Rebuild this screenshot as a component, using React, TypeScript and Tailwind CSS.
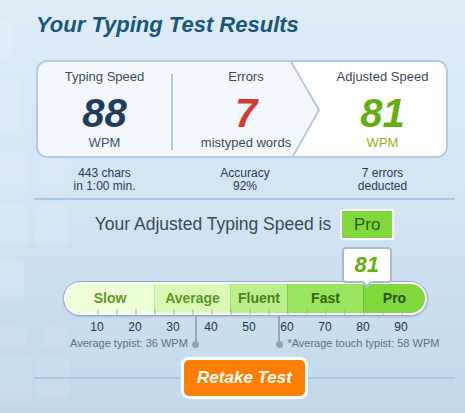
import React from "react";

const FONT = { fontFamily: '"Liberation Sans", Arial, sans-serif' };

// x position (relative to content column) of a WPM value on the scale
const pos = (wpm: number) => 25 + 3.8 * wpm;

const segments = [
  { label: "Slow", w: "w-[88px]", bg: "bg-[#ecffd6]", text: "text-[#5f9b24]", line: "" },
  { label: "Average", w: "w-[76px]", bg: "bg-[#dbf9b6]", text: "text-[#5a9722]", line: "border-l border-[#c4e2a4]" },
  { label: "Fluent", w: "w-[57px]", bg: "bg-[#bbef8c]", text: "text-[#4a8419]", line: "border-l border-[#a9d87e]" },
  { label: "Fast", w: "w-[76px]", bg: "bg-[#9be45d]", text: "text-[#34630f]", line: "border-l border-[#86cc4c]" },
  { label: "Pro", w: "flex-1", bg: "bg-[#80d83a]", text: "text-[#2d500c]", line: "border-l border-[#6fbf2f]" },
];

function KeyPattern() {
  const keys = [
    [-6, 150, 34, 44], [38, 158, 32, 38], [-6, 204, 34, 42], [34, 204, 34, 42],
    [-6, 258, 30, 40], [-6, 326, 32, 24], [42, 326, 24, 22], [-6, 356, 38, 46],
    [36, 356, 34, 42], [-6, 80, 26, 50], [-6, 20, 18, 40],
  ];
  return (
    <svg className="pointer-events-none absolute inset-0" width="465" height="413">
      {keys.map(([x, y, w, h], i) => (
        <rect key={i} x={x} y={y} width={w} height={h} rx="6" fill="#ffffff" fillOpacity="0.1" />
      ))}
    </svg>
  );
}

function Stat({ label, value, unit, valueClass, unitClass }: { label: string; value: string; unit: string; valueClass: string; unitClass: string }) {
  return (
    <div className="relative flex flex-col items-center">
      <div className="text-[13px] leading-[16px] text-[#3d4b5c]">{label}</div>
      <div className={`mt-[6px] text-[40px] leading-[44px] font-bold italic ${valueClass}`}>{value}</div>
      <div className={`text-[13px] leading-[16px] ${unitClass}`}>{unit}</div>
    </div>
  );
}

export default function App() {
  const ticks = [10, 15, 20, 25, 30, 35, 40, 45, 50, 55, 60, 65, 70, 75, 80, 85, 90];
  const numbers = [10, 20, 30, 40, 50, 60, 70, 80, 90];

  return (
    <div style={FONT} className="relative h-[413px] w-[465px] overflow-hidden bg-[linear-gradient(180deg,#dfecf8_0%,#d3e4f3_50%,#c2d8eb_100%)]">
      <KeyPattern />

      <div className="relative pl-[34px] pr-[10px] pt-[12px]">
        <h1 className="ml-[2px] text-[22px] leading-[26px] font-bold italic text-[#16577a]">Your Typing Test Results</h1>

        {/* results card */}
        <div className="relative ml-[2px] mt-[22px] h-[98px] w-[412px] overflow-hidden rounded-[11px] border-2 border-[#b3cbe2] bg-[#f2f8fe]">
          <svg className="absolute inset-0" width="408" height="94">
            <polygon points="252,0 281,48 254,94 408,94 408,0" fill="#ffffff" />
            <polyline points="252,-2 281,48 254,96" fill="none" stroke="#b3cbe2" strokeWidth="2" />
          </svg>
          <div className="relative grid grid-cols-[133px_2px_146px_127px] pt-[7px]">
            <Stat label="Typing Speed" value="88" unit="WPM" valueClass="text-[#1e3d5c]" unitClass="text-[#3d5470]" />
            <div className="mt-[5px] h-[76px] bg-[#b3cbe2]" />
            <Stat label="Errors" value="7" unit="mistyped words" valueClass="text-[#d43a32]" unitClass="text-[#3d4b5c]" />
            <Stat label="Adjusted Speed" value="81" unit="WPM" valueClass="text-[#62ad10]" unitClass="text-[#93b21c]" />
          </div>
        </div>

        {/* details */}
        <div className="ml-[4px] mt-[9px] grid grid-cols-[133px_148px_127px] text-center text-[12px] leading-[13px] text-[#2b3a56]">
          <div>443 chars<br />in 1:00 min.</div>
          <div>Accuracy<br />92%</div>
          <div>7 errors<br />deducted</div>
        </div>

        <div className="mt-[5px] h-[2px] bg-[#a9c9e9]" />

        <div className="mt-[9px] flex items-center justify-center gap-[9px]">
          <span className="text-[17.5px] text-[#3b4a5c]">Your Adjusted Typing Speed is</span>
          <span className="flex h-[31px] w-[54px] items-center justify-center rounded-[2px] border-2 border-white bg-[#80d83c] text-[17px] text-[#2d5a0a]">Pro</span>
        </div>

        {/* speed scale */}
        <div className="relative pt-[41px]">
          <div className="absolute top-[7px] z-10 flex h-[36px] w-[50px] items-center justify-center rounded-[4px] border-2 border-[#a6bcd3] bg-white" style={{ left: pos(81) - 25 }}>
            <span className="text-[22px] leading-none font-bold italic text-[#62ad10]">81</span>
            <span className="absolute -bottom-[5px] left-1/2 h-[8px] w-[8px] -translate-x-1/2 rotate-45 border-b-2 border-r-2 border-[#a6bcd3] bg-white" />
          </div>

          <div className="relative ml-[29px] w-[365px] rounded-full border border-[#94adc5] bg-white p-[2px] shadow-[0_1px_2px_rgba(60,90,120,0.25)]">
            <div className="flex h-[29px] overflow-hidden rounded-full">
              {segments.map((s) => (
                <div key={s.label} className={`flex items-center justify-center ${s.w} ${s.bg} ${s.line}`}>
                  <span className={`text-[14px] font-bold ${s.text}`}>{s.label}</span>
                </div>
              ))}
            </div>
            <svg className="pointer-events-none absolute left-0 top-0" width="365" height="35">
              {ticks.map((t) => (
                <line key={t} x1={pos(t) - 29} x2={pos(t) - 29} y1="27" y2="33" stroke="#a1b196" strokeWidth="1" />
              ))}
            </svg>
          </div>

          <div className="ml-[44px] mt-[4px] flex text-[12px] leading-[14px] text-[#24364a]">
            {numbers.map((n) => (
              <div key={n} className="w-[38px] text-center">{n}</div>
            ))}
          </div>

          <div className="relative h-[16px]">
            <span className="absolute top-[2px] whitespace-nowrap text-right text-[11px] leading-[14px] text-[#5b7189]" style={{ right: 421 - pos(36) + 8 }}>
              Average typist: 36 WPM
            </span>
            <span className="absolute top-[2px] whitespace-nowrap text-[11px] leading-[14px] text-[#5b7189]" style={{ left: pos(58) + 8 }}>
              *Average touch typist: 58 WPM
            </span>
          </div>

          {[36, 58].map((v) => (
            <div key={v} className="absolute top-[76px] flex w-[7px] flex-col items-center" style={{ left: pos(v) - 3.5 }}>
              <div className="h-[25px] w-[2px] bg-[#94a8bc]" />
              <div className="h-[7px] w-[7px] rounded-full bg-[#8ea3b8]" />
            </div>
          ))}
        </div>

        <div className="mt-[7px] flex items-center">
          <div className="h-[2px] flex-1 bg-[#a9c9e9]" />
          <button className="flex h-[42px] w-[127px] items-center justify-center rounded-[8px] border-[3px] border-white bg-[#ff7d00] text-[17px] font-bold italic text-white">
            Retake Test
          </button>
          <div className="h-[2px] flex-1 bg-[#a9c9e9]" />
        </div>
      </div>
    </div>
  );
}
